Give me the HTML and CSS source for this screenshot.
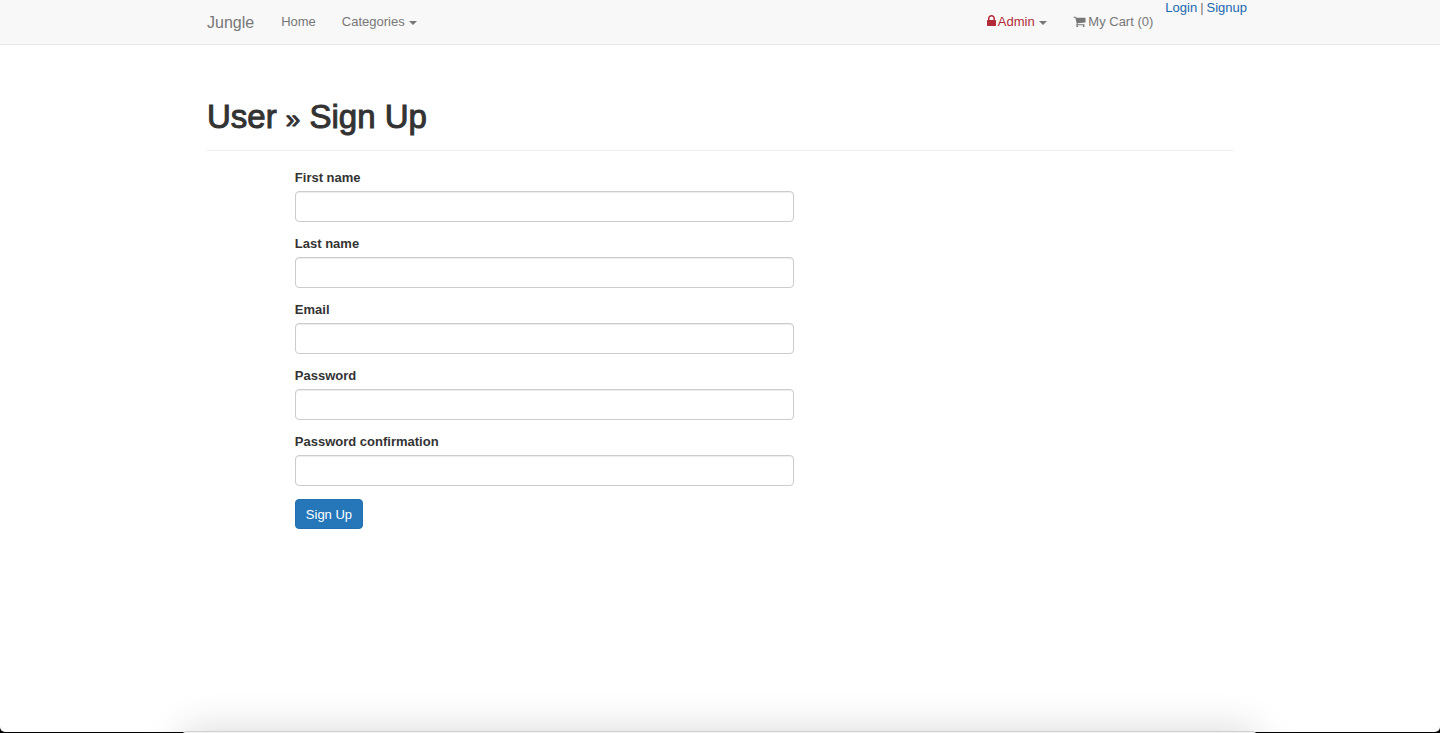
FILE: index.html
```html
<!DOCTYPE html>
<html lang="en">
<head>
  <meta charset="utf-8">
  <meta name="viewport" content="width=device-width, initial-scale=1">
  <title>Jungle</title>
  <link rel="stylesheet" href="styles.css">
</head>
<body>
  <header class="navbar">
    <div class="navbar-inner">
      <a class="brand" href="#">Jungle</a>
      <nav class="nav">
        <a class="nav-link" href="#">Home</a>
        <a class="nav-link" href="#">Categories <span class="caret"></span></a>
      </nav>
      <nav class="nav nav-right">
        <a class="nav-link nav-admin" href="#"><svg class="icon-lock" viewBox="320 128 1152 1536" aria-hidden="true"><path d="M640 768h512v-192q0-106-75-181t-181-75-181 75-75 181v192zm832 96v576q0 40-28 68t-68 28h-960q-40 0-68-28t-28-68v-576q0-40 28-68t68-28h32v-192q0-184 132-316t316-132 316 132 132 316v192h32q40 0 68 28t28 68z"/></svg>Admin <span class="caret"></span></a>
        <a class="nav-link" href="#"><svg class="icon-cart" viewBox="0 0 1792 1792" aria-hidden="true"><path d="M704 1536q0 52-38 90t-90 38-90-38-38-90 38-90 90-38 90 38 38 90zm896 0q0 52-38 90t-90 38-90-38-38-90 38-90 90-38 90 38 38 90zm128-1088v512q0 24-16.5 42.5t-40.5 21.5l-1044 122q13 60 13 70 0 16-24 64h920q26 0 45 19t19 45-19 45-45 19h-1024q-26 0-45-19t-19-45q0-11 8-31.5t16-36 21.5-40 15.5-29.5l-177-823h-204q-26 0-45-19t-19-45 19-45 45-19h256q16 0 28.5 6.5t19.5 15.5 13 24.5 8 26 5.5 29.5 4.5 26h1201q26 0 45 19t19 45z"/></svg>My Cart (0)</a>
      </nav>
      <div class="session"><a href="#">Login</a><span class="divider">|</span><a href="#">Signup</a></div>
    </div>
  </header>

  <main class="container">
    <h1 class="page-title">User <span class="separator">»</span> Sign Up</h1>
    <div class="row">
      <form class="signup">
        <div class="field">
          <label for="first-name">First name</label>
          <input id="first-name" type="text">
        </div>
        <div class="field">
          <label for="last-name">Last name</label>
          <input id="last-name" type="text">
        </div>
        <div class="field">
          <label for="email">Email</label>
          <input id="email" type="text">
        </div>
        <div class="field">
          <label for="password">Password</label>
          <input id="password" type="password">
        </div>
        <div class="field">
          <label for="password-confirmation">Password confirmation</label>
          <input id="password-confirmation" type="password">
        </div>
        <button class="submit" type="button">Sign Up</button>
      </form>
    </div>
  </main>

  <div class="dock-layer" aria-hidden="true"><div class="dock"></div></div>
</body>
</html>
```
FILE: styles.css
```css
* {
  box-sizing: border-box;
}

html {
  background: #000;
}

body {
  margin: 0;
  min-height: calc(100vh - 1px);
  border-radius: 0 0 5px 5px;
  background: #fff;
  color: #333;
  font: 13px/18px "Liberation Sans", Arial, sans-serif;
}

a {
  color: #337ab7;
  text-decoration: none;
}

.navbar {
  background: #f8f8f8;
  border-bottom: 1px solid #e7e7e7;
}

.navbar-inner {
  display: flex;
  align-items: flex-start;
  max-width: 1054px;
  margin: 0 auto;
}

.brand {
  padding: 14px 14px 12px;
  color: #777;
  font-size: 16px;
}

.nav {
  display: flex;
  gap: 2px;
}

.nav-right {
  margin-left: auto;
}

.nav-link {
  padding: 13px 12px;
  color: #777;
}

.nav-link:first-child {
  padding-left: 13px;
}

.nav-admin {
  color: #b02a37;
}

.caret {
  display: inline-block;
  margin-left: 1px;
  vertical-align: middle;
  border-top: 4px solid #777;
  border-left: 4px solid transparent;
  border-right: 4px solid transparent;
}

.icon-lock,
.icon-cart {
  fill: currentColor;
  margin-right: 2px;
}

.icon-lock {
  width: 9px;
  height: 12px;
  vertical-align: -1px;
}

.icon-cart {
  width: 13px;
  height: 13px;
  vertical-align: -2px;
}

.session {
  display: flex;
  gap: 3px;
  line-height: 16px;
}

.session a {
  color: #1b67ad;
}

.session .divider {
  color: #777;
}

.container {
  max-width: 1054px;
  margin: 0 auto;
  padding: 54px 14px 36px;
}

.page-title {
  margin: 0 0 18px;
  padding-bottom: 15px;
  border-bottom: 1px solid #eee;
  font-size: 33px;
  font-weight: 400;
  line-height: 36px;
  -webkit-text-stroke: 1px #333;
}

.page-title .separator {
  font-size: 26px;
  line-height: 1;
}

.row {
  margin: 0 -14px;
}

.signup {
  width: 50%;
  margin-left: 8.333%;
  padding: 0 14px;
}

.field {
  display: flex;
  flex-direction: column;
  gap: 4px;
  margin-bottom: 13px;
}

.field label {
  align-self: flex-start;
  font-weight: 700;
}

.field input {
  width: 100%;
  height: 31px;
  padding: 5px 11px;
  border: 1px solid #ccc;
  border-radius: 4px;
  background: #fff;
  box-shadow: inset 0 1px 1px rgba(0, 0, 0, 0.075);
  color: #555;
  font: inherit;
}

.submit {
  padding: 6px 10px 4px;
  border: 1px solid #2270b0;
  border-radius: 4px;
  background: #2577ba;
  color: #fff;
  font: inherit;
}

/* Dock edge and its shadow, over the bottom of the window */
.dock-layer {
  position: fixed;
  inset: auto 0 0 0;
  height: 80px;
  overflow: hidden;
  pointer-events: none;
}

.dock {
  position: absolute;
  top: 78px;
  left: 183px;
  right: 184px;
  height: 60px;
  border: 1px solid #d0d0d0;
  border-radius: 3px;
  background: #f4f4f4;
  box-shadow: 0 0 40px rgba(0, 0, 0, 0.16);
}
```
